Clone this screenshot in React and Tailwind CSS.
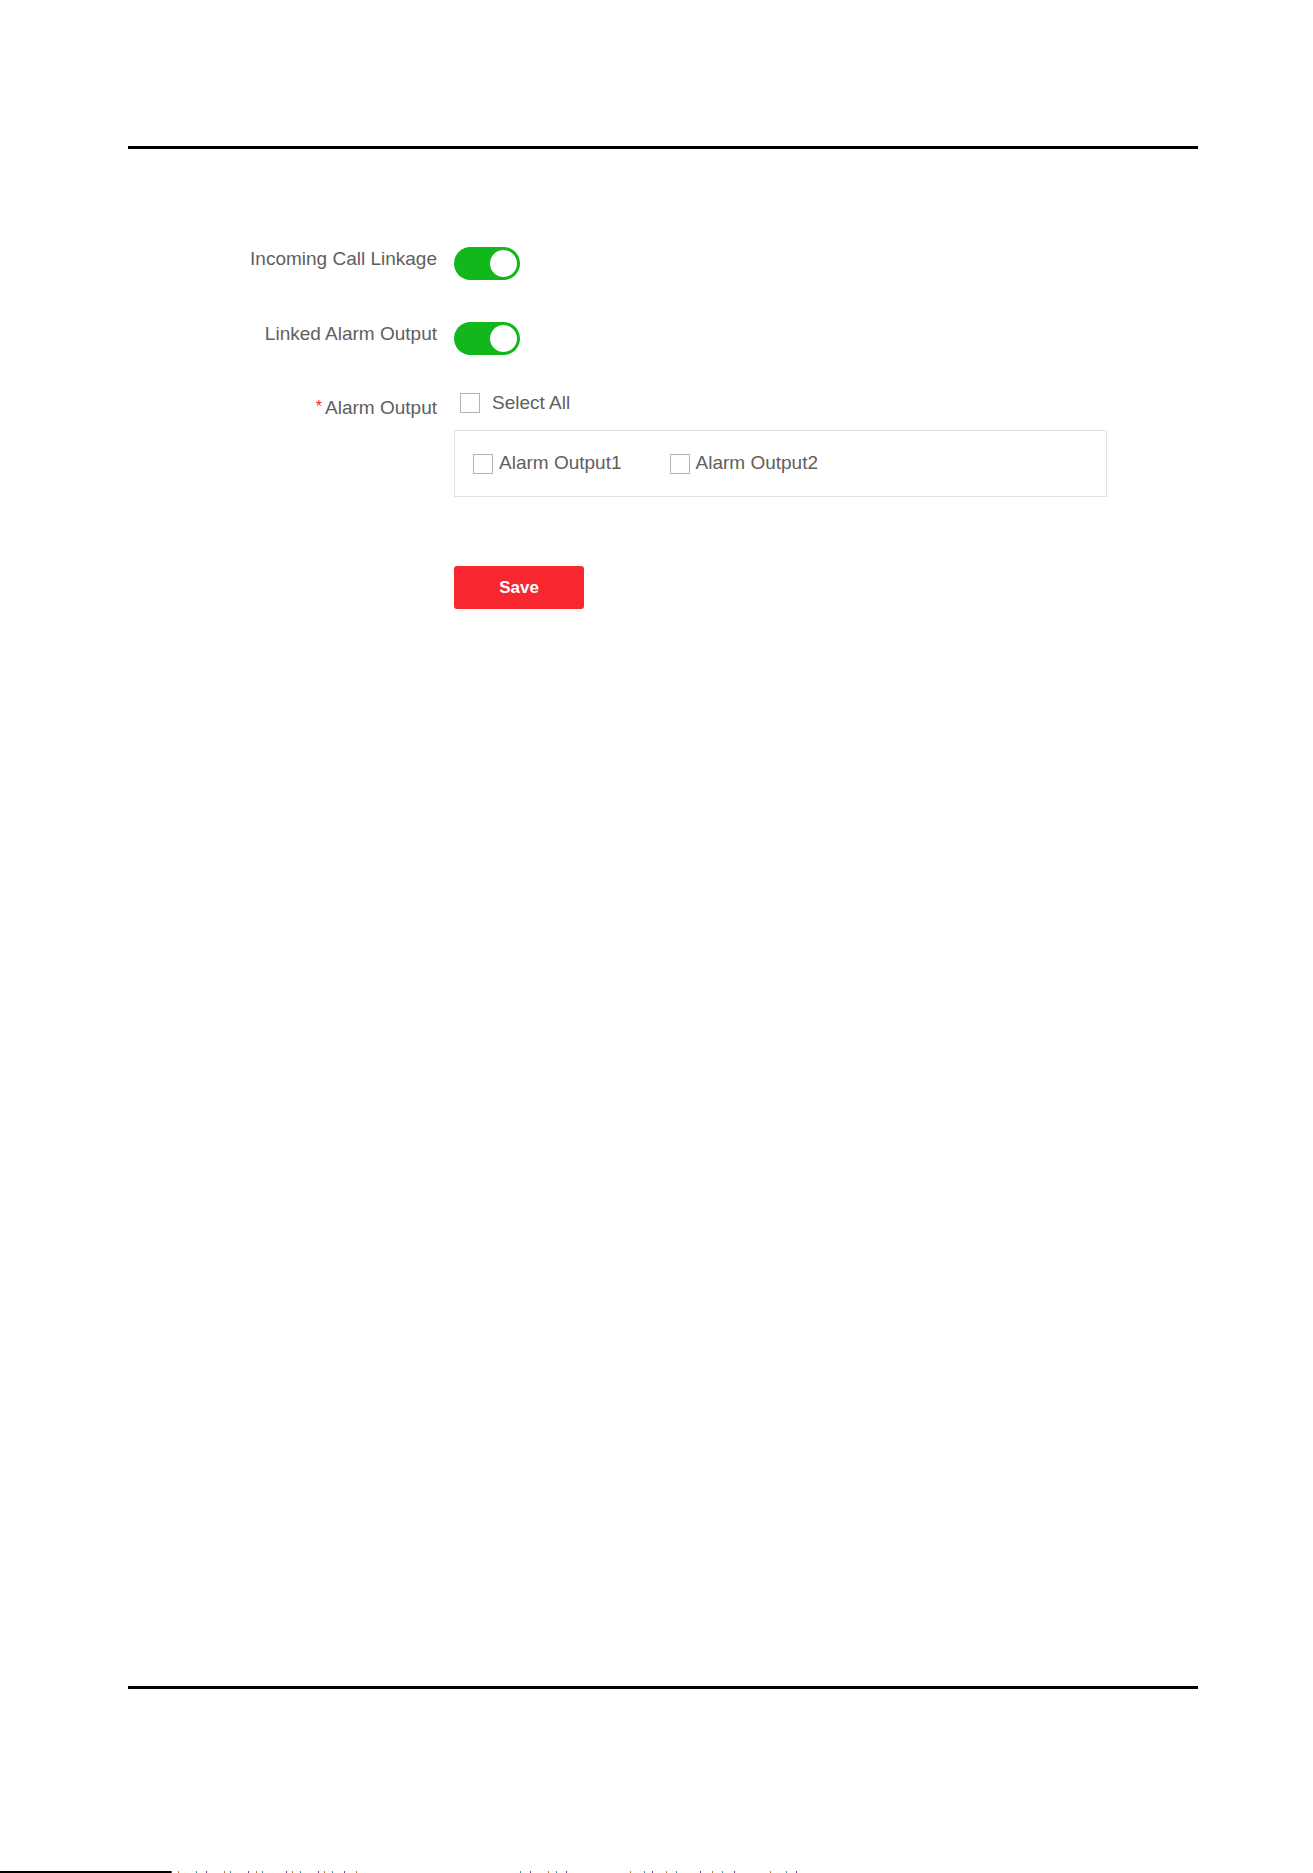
import { useState } from "react";

// Small on/off switch in the green "enabled" style
function Toggle({ on = true }) {
  return (
    <div
      className={
        on
          ? "flex h-[33px] w-[66px] items-center justify-end rounded-full bg-[#12b71c] p-[3px]"
          : "flex h-[33px] w-[66px] items-center justify-start rounded-full bg-[#cfcfcf] p-[3px]"
      }
    >
      <div className="h-[27px] w-[27px] rounded-full bg-white" />
    </div>
  );
}

function Box({ checked = false }) {
  return (
    <span
      className={
        checked
          ? "inline-block h-[20px] w-[20px] shrink-0 border border-[#12b71c] bg-[#12b71c]"
          : "inline-block h-[20px] w-[20px] shrink-0 border border-[#b4b4b4] bg-white"
      }
    />
  );
}

function Row({ label, required = false, labelPad = "pt-0", children }) {
  return (
    <div className="flex items-start gap-[17px]">
      <div
        className={`w-[309px] shrink-0 text-right text-[19px] leading-[24px] text-[#606060] ${labelPad}`}
      >
        {required && (
          <span className="relative -top-[2px] mr-[3px] text-[16px] text-[#f5222d]">*</span>
        )}
        {label}
      </div>
      <div className="flex flex-col">{children}</div>
    </div>
  );
}

const footerDots = [
  171, 178, 196, 206, 224, 230, 248, 256, 262, 286, 292, 300, 318, 324, 332, 344, 356,
  520, 530, 548, 556, 566, 630, 644, 652, 666, 676, 700, 712, 722, 734, 770, 786, 796,
];

export default function App() {
  const [outputs] = useState(["Alarm Output1", "Alarm Output2"]);

  return (
    <div className="flex h-[1873px] w-full flex-col overflow-hidden bg-white font-['Liberation_Sans',Arial,sans-serif]">
      <div className="ml-[128px] flex w-[1070px] flex-col">
        <div className="mt-[146px] h-[3px] bg-black" />

        <div className="mt-[98px] flex flex-col">
          <Row label="Incoming Call Linkage">
            <Toggle on />
          </Row>

          <div className="mt-[42px]">
            <Row label="Linked Alarm Output">
              <Toggle on />
            </Row>
          </div>

          <div className="mt-[36px]">
            <Row label="Alarm Output" required labelPad="pt-[5px]">
              <label className="flex h-[24px] items-center gap-[12px] pl-[6px] text-[19px] text-[#606060]">
                <Box />
                Select All
              </label>
              <div className="mt-[15px] flex h-[67px] w-[653px] items-center gap-[48px] border border-[#e2e2e2] pl-[18px]">
                {outputs.map((name) => (
                  <label
                    key={name}
                    className="flex items-center gap-[6px] text-[19px] text-[#606060]"
                  >
                    <Box />
                    {name}
                  </label>
                ))}
              </div>
              <button className="mt-[69px] h-[43px] w-[130px] rounded-[3px] bg-[#f7262f] text-[17px] font-bold text-white">
                Save
              </button>
            </Row>
          </div>
        </div>

        <div className="mt-[1077px] h-[3px] bg-black" />
      </div>

      <div className="mt-auto flex h-[2px] items-end">
        <div className="h-[2px] w-[171px] bg-black" />
        <div className="relative h-[2px] flex-1">
          {footerDots.map((x, i) => (
            <span
              key={x}
              className={
                i % 3 === 0
                  ? "absolute top-0 h-[2px] w-[1px] bg-[#7a3fa0]"
                  : i % 3 === 1
                  ? "absolute top-0 h-[2px] w-[1px] bg-[#c07a2a]"
                  : "absolute top-0 h-[2px] w-[1px] bg-[#3a9aa8]"
              }
              style={{ left: x - 171 }}
            />
          ))}
        </div>
      </div>
    </div>
  );
}
